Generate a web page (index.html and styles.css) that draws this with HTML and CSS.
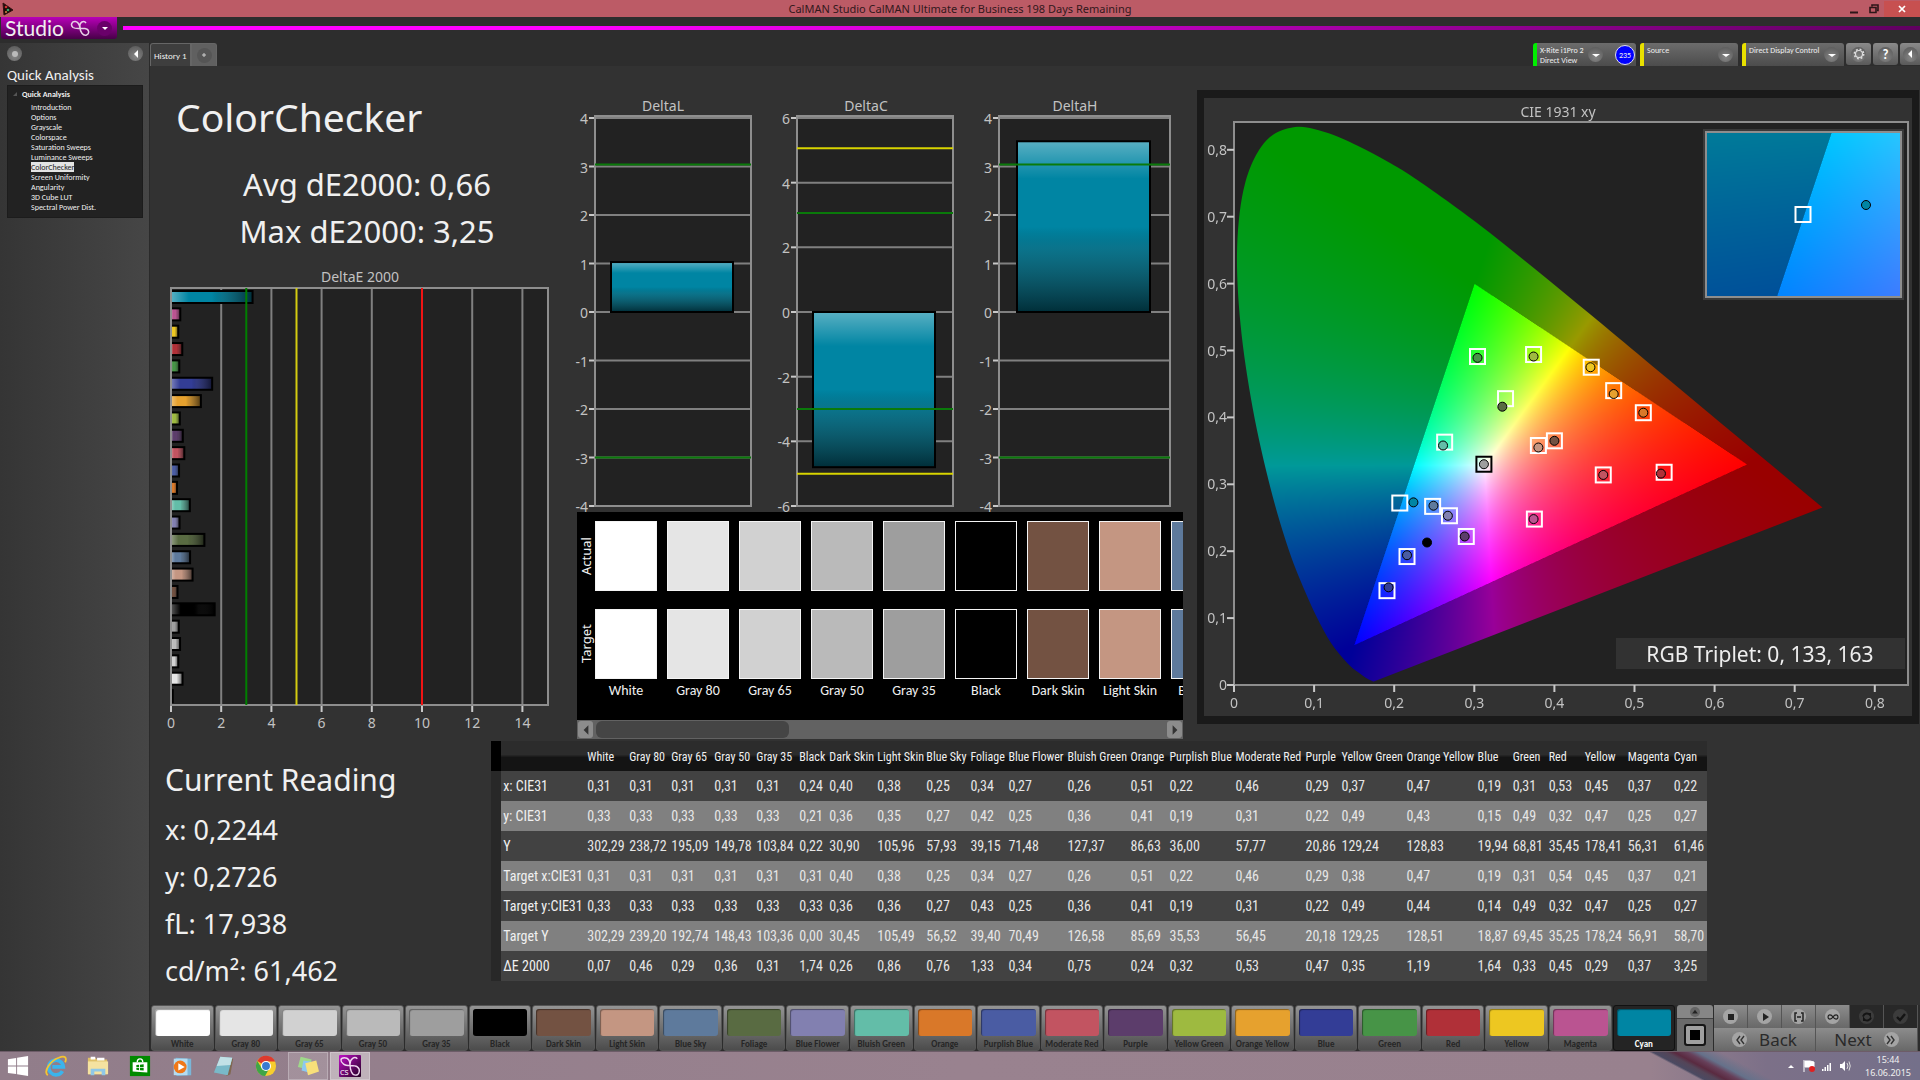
FILE: index.html
```html
<!DOCTYPE html>
<html lang="en">
<head>
    <meta charset="utf-8">
    <title>CalMAN Studio</title>
    <link rel="stylesheet" href="styles.css">
</head>
<body>
    <header class="titlebar">
        <svg class="app-icon" viewBox="0 0 12 14"><path d="M1 1 L11 8 L2 13 Z" fill="#1c0a0a" stroke="#32110f"/><circle cx="4" cy="5" r="1.3" fill="#c33"/><circle cx="6" cy="8" r="1.3" fill="#3a6"/><circle cx="4" cy="10" r="1" fill="#d84"/></svg>
        <span class="titlebar-text">CalMAN Studio CalMAN Ultimate for Business 198 Days Remaining</span>
        <div class="window-buttons">
            <button aria-label="Minimize"><svg viewBox="0 0 10 10"><path d="M1 8.5h8" stroke="#2c1618" stroke-width="2"/></svg></button>
            <button aria-label="Restore"><svg viewBox="0 0 10 10"><path d="M3 2.5V1h6v5.500H8M1 3.500h6v5H1z" fill="none" stroke="#2c1618" stroke-width="1.600"/></svg></button>
            <button class="close" aria-label="Close"><svg viewBox="0 0 10 10"><path d="M2 2l6 6M8 2l-6 6" stroke="#fff" stroke-width="1.700"/></svg></button>
        </div>
    </header>

    <div class="brandbar">
        <button class="brand">
            <span>Studio</span>
            <svg class="brand-logo" viewBox="0 0 20 17"><path d="M16 3 C14 0 9 2 10 7 C10 12 13 16 16.500 15 C20 13.500 19 9 15 8.500 C11 8 6 9.500 3 7.500 C0 5 2 1 5.500 1.500 C9 2 9.500 5 10 8" fill="none" stroke="#e6cfe6" stroke-width="1.500"/></svg>
            <span class="round round-purple"><svg viewBox="0 0 14 14"><path d="M4 6h6l-3 3z" fill="#fff"/></svg></span>
        </button>
        <div class="brand-line"></div>
    </div>

    <div class="workspace">
        <aside class="sidebar">
            <div class="sidebar-top">
                <button class="round" aria-label="Pin"><svg viewBox="0 0 14 14"><circle cx="7" cy="7" r="3" fill="#bbb"/></svg></button>
                <button class="round" aria-label="Collapse"><svg viewBox="0 0 14 14"><path d="M9 3v8l-4-4z" fill="#fff"/></svg></button>
            </div>
            <h2>Quick Analysis</h2>
            <nav class="tree">
                <div class="tree-root"><svg viewBox="0 0 4 4"><path d="M4 0v4H0z" fill="#555"/></svg>Quick Analysis</div>
                <a href="#">Introduction</a>
                <a href="#">Options</a>
                <a href="#">Grayscale</a>
                <a href="#">Colorspace</a>
                <a href="#">Saturation Sweeps</a>
                <a href="#">Luminance Sweeps</a>
                <a href="#" class="selected">ColorChecker</a>
                <a href="#">Screen Uniformity</a>
                <a href="#">Angularity</a>
                <a href="#">3D Cube LUT</a>
                <a href="#">Spectral Power Dist.</a>
            </nav>
        </aside>

        <div class="content">
            <div class="toolbar">
                <div class="tabs">
                    <button class="tab">History 1</button>
                    <button class="tab tab-add" aria-label="Add tab"><span class="round round-dim"><svg viewBox="0 0 14 14"><path d="M7 5v4M5 7h4" stroke="#ccc"/></svg></span></button>
                </div>
                <div class="devices">
                    <div class="device device-meter">
                        <button class="device-name">X-Rite i1Pro 2<br>Direct View</button>
                        <span class="round"><svg viewBox="0 0 14 14"><path d="M3 6h8l-4 3z" fill="#fff"/></svg></span>
                        <span class="level">235</span>
                    </div>
                    <div class="device device-source">
                        <button class="device-name">Source</button>
                        <span class="round"><svg viewBox="0 0 14 14"><path d="M3 6h8l-4 3z" fill="#fff"/></svg></span>
                    </div>
                    <div class="device device-display">
                        <button class="device-name">Direct Display Control</button>
                        <span class="round"><svg viewBox="0 0 14 14"><path d="M3 6h8l-4 3z" fill="#fff"/></svg></span>
                    </div>
                    <button class="tool" aria-label="Settings"><span class="round"><svg viewBox="0 0 14 14"><circle cx="7" cy="7" r="3.500" fill="none" stroke="#ddd" stroke-width="1.200"/><circle cx="7" cy="7" r="4.700" fill="none" stroke="#ddd" stroke-width="1.500" stroke-dasharray="1.800 1.900"/></svg></span></button>
                    <button class="tool" aria-label="Help"><span class="round">?</span></button>
                    <button class="tool tool-edge" aria-label="Expand"><span class="round"><svg viewBox="0 0 14 14"><path d="M9 3v8L5 7z" fill="#fff"/></svg></span></button>
                </div>
            </div>

            <main class="page">
                <div class="analysis">
                    <section class="summary">
                        <h1>ColorChecker</h1>
                        <div class="stats">
                            <div>Avg dE2000: 0,66</div>
                            <div>Max dE2000: 3,25</div>
                        </div>
                        <svg id="deltaE" class="chart" viewBox="0 0 419 466"></svg>
                    </section>

                    <section class="deltas">
                        <div class="delta-charts">
                            <svg id="deltaL" class="chart" viewBox="0 0 205 417"></svg>
                            <svg id="deltaC" class="chart" viewBox="0 0 205 417"></svg>
                            <svg id="deltaH" class="chart" viewBox="0 0 205 417"></svg>
                        </div>
                        <div class="strip">
                            <div class="strip-labels"><span>Actual</span><span>Target</span></div>
                            <div class="strip-items" id="strip"></div>
                        </div>
                        <div class="scrollbar">
                            <button aria-label="Scroll left"><svg viewBox="0 0 10 14"><path d="M8 1v12L2 7z" fill="#333"/></svg></button>
                            <div class="scroll-track"><div class="scroll-thumb"></div></div>
                            <button aria-label="Scroll right"><svg viewBox="0 0 10 14"><path d="M2 1v12l6-6z" fill="#333"/></svg></button>
                        </div>
                    </section>

                    <section class="cie">
                        <canvas id="gamut" width="1416" height="1236"></canvas>
                        <svg id="ciePlot" class="chart" viewBox="0 0 708 618"></svg>
                    </section>
                </div>

                <div class="lower">
                    <section class="reading">
                        <h3>Current Reading</h3>
                        <div>x: 0,2244</div>
                        <div>y: 0,2726</div>
                        <div>fL: 17,938</div>
                        <div>cd/m²: 61,462</div>
                    </section>
                    <table class="results" id="results"></table>
                </div>
            </main>

            <footer class="patterns">
                <div class="pattern-list" id="patterns"></div>
                <div class="pattern-window">
                    <button class="up" aria-label="More patterns"><span class="round round-small"><svg viewBox="0 0 14 14"><path d="M3 9h8L7 4z" fill="#222"/></svg></span></button>
                    <button class="window-size" aria-label="Window size"><span></span></button>
                </div>
                <div class="transport">
                    <div class="transport-row">
                        <button aria-label="Stop"><span class="round round-light"><svg viewBox="0 0 14 14"><path d="M4 4h6v6H4z" fill="#222"/></svg></span></button>
                        <button aria-label="Play"><span class="round round-light"><svg viewBox="0 0 14 14"><path d="M5 3l6 4-6 4z" fill="#222"/></svg></span></button>
                        <button aria-label="Series"><span class="round round-light"><svg viewBox="0 0 14 14"><path d="M5 3H3v8h2M9 3h2v8H9M5 7h4" fill="none" stroke="#222" stroke-width="1.500"/></svg></span></button>
                        <button aria-label="Continuous"><span class="round round-light"><svg viewBox="0 0 14 14"><path d="M7 7C5 4 2 4.500 2 7s3 3 5 0 5-2.500 5 0-3 3-5 0" fill="none" stroke="#222" stroke-width="1.200"/></svg></span></button>
                        <button class="off" aria-label="Refresh"><span class="round round-dark"><svg viewBox="0 0 14 14"><path d="M3 6.500C4 3 8 2.500 10 5V3M11 7.500C10 11 6 11.500 4 9v2" fill="none" stroke="#141414" stroke-width="2"/></svg></span></button>
                        <button class="off" aria-label="Accept"><span class="round round-dark"><svg viewBox="0 0 14 14"><path d="M3 7l3 3 5-6" fill="none" stroke="#141414" stroke-width="2.400"/></svg></span></button>
                    </div>
                    <div class="transport-row transport-nav">
                        <button><span class="round round-light"><svg viewBox="0 0 14 14"><path d="M7 3L4 7l3 4M11 3L8 7l3 4" fill="none" stroke="#333" stroke-width="1.400"/></svg></span>Back</button>
                        <button>Next<span class="round round-light"><svg viewBox="0 0 14 14"><path d="M3 3l3 4-3 4M7 3l3 4-3 4" fill="none" stroke="#333" stroke-width="1.400"/></svg></span></button>
                    </div>
                </div>
            </footer>
        </div>
    </div>

    <div class="taskbar">
        <button class="start" aria-label="Start"><svg viewBox="0 0 24 24"><path d="M1 4.500l9-1.300v8.300H1zM11 3l12-1.800v10.300H11zM1 12.500h9v8.300l-9-1.300zM11 12.500h12v10.300L11 21z" fill="#fff"/></svg></button>
        <button aria-label="Internet Explorer"><svg viewBox="0 0 24 24"><path d="M19 17.500A8 8 0 1 1 20 13H8" fill="none" stroke="#3bb4ec" stroke-width="4"/><path d="M3 22C-2 18 6 6 15 3c7-3 9 0 7 5" fill="none" stroke="#f4c430" stroke-width="2"/></svg></button>
        <button aria-label="File Explorer"><svg viewBox="0 0 24 24"><path d="M1 3h8l2 2h11v16H1z" fill="#dfc067"/><path d="M4 2h5v3H4zM11 3h8v3h-8z" fill="#fff"/><path d="M1 7h22v14H1z" fill="#f5e2a0"/><path d="M4 22v-7h16v7h-4v-4H8v4z" fill="#8fc8e8"/></svg></button>
        <button aria-label="Store"><svg viewBox="0 0 24 24"><path d="M1 1h22v22H1z" fill="#008a00"/><path d="M4 8h16v11l-16-1z" fill="#fff"/><path d="M9 8c0-5 6-5 6 0" fill="none" stroke="#fff" stroke-width="1.500"/><path d="M8 11l3-.4V13H8zM12 10.500l4-.5v3h-4zM8 14h3v2.600L8 16.200zM12 14h4v3l-4-.4z" fill="#008a00"/></svg></button>
        <button aria-label="Media Player"><svg viewBox="0 0 24 24"><path d="M5 3l17 1v18l-16 1z" fill="#7ab6d8"/><path d="M3 4h15v18H3z" fill="#b5dcf0"/><circle cx="10" cy="13" r="7" fill="#f07818"/><path d="M8 9l7 4-7 4z" fill="#fff"/></svg></button>
        <button aria-label="Notepad"><svg viewBox="0 0 24 24"><path d="M9 2l13 2-3 17-4 2z" fill="#806850"/><path d="M8 2l13 1-5 19-15-3z" fill="#79b9c8"/><path d="M8 2l13 1-2 8L4 12z" fill="#c2e1e6"/></svg></button>
        <button aria-label="Chrome"><svg viewBox="0 0 24 24"><circle cx="12" cy="12" r="11" fill="#f7cd2e"/><path d="M12 12L2.500 6.500A11 11 0 0 1 22 7H12z" fill="#de3a2e"/><path d="M2.500 6.500A11 11 0 0 0 11 23l5-9H7z" fill="#3fa548"/><circle cx="12" cy="12" r="5.500" fill="#fff"/><circle cx="12" cy="12" r="4.300" fill="#3a7bd0"/></svg></button>
        <button class="open" aria-label="Sticky Notes"><svg viewBox="0 0 24 24"><path d="M4 2l12 3-3 11-12-3z" fill="#9fd98a"/><path d="M7 6l12 2-3 12-11-3z" fill="#8cc8f0"/><path d="M9 9l12-3 3 12-12 4z" fill="#f8e07a"/></svg></button>
        <button class="open active" aria-label="CalMAN Studio"><svg viewBox="0 0 24 24"><defs><linearGradient id="cs" x1="0" y1="0" x2="1" y2="1"><stop offset="0" stop-color="#c010c8"/><stop offset="1" stop-color="#200020"/></linearGradient></defs><rect width="24" height="24" rx="1" fill="url(#cs)"/><path d="M20 4C17 1 12 4 12 10s2 12 6 12 6-6 2-9-11 0-15-3-4-7 1-7 6 4 6 8" fill="none" stroke="#f0d8f0" stroke-width="1.500"/><text x="1" y="22" font-size="8" fill="#fff">CS</text></svg></button>
        <div class="tray">
            <svg viewBox="0 0 12 12"><path d="M3 8h6L6 5z" fill="#fff"/></svg>
            <svg viewBox="0 0 12 14"><path d="M1 1v12M2 2h5l4 1v5H2z" fill="#fff" stroke="#fff"/><circle cx="9" cy="10" r="3" fill="#e02020"/></svg>
            <svg viewBox="0 0 12 12"><path d="M1 9h1.500v2H1zM3.500 7H5v4H3.500zM6 5h1.500v6H6zM8.500 3H10v8H8.500z" fill="#fff"/></svg>
            <svg viewBox="0 0 12 12"><path d="M1 4h2l3-3v10L3 8H1z" fill="#fff"/><path d="M8 3q2 3 0 6M10 1.500q2.500 4.500 0 9" fill="none" stroke="#ddd"/></svg>
            <div class="clock">15:44<br>16.06.2015</div>
        </div>
    </div>
    <script src="app.js"></script>
</body>
</html>
```
FILE: styles.css
```css
* { margin: 0; padding: 0; box-sizing: border-box; }
body { display: flex; flex-direction: column; height: 100vh; overflow: hidden; font-family: "Noto Sans", "Open Sans", sans-serif; font-size: 14px; color: #f0f0f0; background: #2d2d2d; }
button { border: none; background: none; color: inherit; font: inherit; cursor: pointer; }
svg { display: block; }
a { color: inherit; text-decoration: none; }

/* window frame */
.titlebar { display: flex; align-items: center; height: 17px; padding-left: 2px; background: #bc5b66; color: #32181c; }
.app-icon { width: 12px; height: 14px; }
.titlebar-text { flex: 1; padding-left: 62px; text-align: center; font-size: 11px; line-height: 17px; }
.window-buttons { display: flex; height: 16px; }
.window-buttons button { display: flex; align-items: center; justify-content: center; width: 20px; }
.window-buttons svg { width: 10px; height: 10px; }
.window-buttons .close { width: 36px; background: #c75050; }

.brandbar { display: flex; align-items: flex-start; height: 26px; padding-left: 1px; gap: 6px; }
.brand { display: flex; align-items: center; justify-content: space-between; width: 116px; height: 22px; padding: 0 5px 0 4px; border-radius: 0 0 3px 3px; background: linear-gradient(#b800b8, #480048); font-family: Lato, sans-serif; font-size: 21px; line-height: 20px; }
.brand-logo { width: 20px; height: 17px; }
.brand-line { flex: 1; height: 4px; margin-top: 9px; background: linear-gradient(90deg, #f0f 0, #f0f 25%, #600060 100%); }

.round { display: flex; align-items: center; justify-content: center; flex: none; width: 15px; height: 15px; border-radius: 50%; background: radial-gradient(circle at 50% 70%, #858585, #555); color: #fff; font-family: Carlito, Lato, sans-serif; font-size: 13px; font-weight: bold; line-height: 15px; }
.round svg { width: 14px; height: 14px; }
.round-purple { background: #6a006a; }
.round-dim { background: #555; }
.round-light { background: #a4a4a4; }
.round-dark { background: #3c3c3c; }
.round-small { width: 10px; height: 10px; background: #666; }
.round-small svg { width: 10px; height: 10px; }

.workspace { display: flex; flex: 1; min-height: 0; }
.sidebar { flex: none; width: 150px; padding: 3px 6px 0 7px; background: linear-gradient(90deg, #353535, #464646); border-right: 1px solid #2a2a2a; font-family: Carlito, Lato, sans-serif; }
.sidebar-top { display: flex; justify-content: space-between; }
.sidebar h2 { margin: 5px 0 1px; font-size: 15px; line-height: 18px; font-weight: normal; }
.tree { padding: 3px 0 5px; background: #222; border: 1px solid #1c1c1c; font-size: 8px; line-height: 10px; }
.tree-root { display: flex; align-items: center; gap: 5px; padding-left: 5px; margin-bottom: 3px; font-weight: bold; }
.tree-root svg { width: 4px; height: 4px; }
.tree a { display: block; width: fit-content; margin-left: 23px; }
.tree .selected { background: #e4e4e4; color: #222; }

.content { display: flex; flex-direction: column; flex: 1; min-width: 0; }
.toolbar { display: flex; justify-content: space-between; height: 23px; }
.tabs { display: flex; }
.tab { height: 23px; padding: 0 3px; background: #3e3e3e; border: 1px solid #666; border-bottom: none; border-radius: 3px 0 0 0; font-family: Carlito, Lato, sans-serif; font-size: 9px; }
.tab-add { width: 26px; padding: 0 5px; background: #606060; border-radius: 0 3px 0 0; }
.devices { display: flex; gap: 2px; font-family: Carlito, Lato, sans-serif; }
.device { display: flex; align-items: center; margin-right: 2px; padding-right: 5px; border-left: 4px solid #e8e000; border-radius: 3px 3px 0 0; background: linear-gradient(#6c6c6c, #4c4c4c); }
.device-name { flex: 1; align-self: stretch; padding: 2px 0 0 3px; text-align: left; font-size: 8px; line-height: 10px; display: flex; }
.device-meter { width: 103px; padding-right: 1px; border-left-color: #0e0; }
.device-source { width: 98px; }
.device-display { width: 102px; margin-right: 0; }
.level { margin-left: 12px; width: 20px; height: 20px; border: 1px solid #dde; border-radius: 50%; background: #00f; text-align: center; font-size: 8px; line-height: 18px; }
.tool { display: flex; align-items: center; justify-content: center; width: 25px; height: 22px; border-radius: 3px; background: linear-gradient(#8a8a8a, #5a5a5a); }
.tool-edge { width: 20px; border-radius: 3px 0 0 3px; }

.page { display: flex; flex-direction: column; flex: 1; min-height: 0; background: #323232; }
.analysis { display: grid; grid-template-columns: 419fr 615fr 735fr; padding-right: 1px; }
.analysis > section { min-width: 0; }
.chart { width: 100%; height: auto; overflow: visible; }
.summary { padding-top: 27px; }
.summary h1 { padding-left: 26px; font-size: 39px; line-height: 48px; font-weight: normal; }
.stats { margin: 20px 0 13px; padding-left: 15px; text-align: center; font-size: 31px; line-height: 47px; }
.deltas { padding-top: 29px; }
.delta-charts { display: grid; grid-template-columns: 1fr 1fr 1fr; }

.strip { display: flex; height: 208px; margin: 0 1px 0 8px; padding-top: 9px; overflow: hidden; background: #000; }
.strip-labels { display: flex; flex-direction: column; gap: 18px; flex: none; width: 18px; }
.strip-labels span { height: 70px; writing-mode: vertical-rl; transform: rotate(180deg); text-align: center; font-size: 13px; line-height: 18px; }
.strip-items { display: flex; gap: 10px; min-width: 0; overflow: hidden; }
.strip-item { flex: none; width: 62px; text-align: center; white-space: nowrap; font-family: Carlito, Lato, sans-serif; font-size: 14px; line-height: 24px; }
.strip-color { height: 70px; border: 1px solid #f4f4f4; }
.strip-color + .strip-color { margin-top: 18px; }
.scrollbar { display: flex; height: 19px; margin: 0 1px 0 8px; padding: 1px; gap: 3px; background: #626262; }
.scrollbar button { display: flex; align-items: center; justify-content: center; width: 15px; border-radius: 3px; background: #8c8c8c; }
.scrollbar svg { width: 8px; height: 12px; }
.scroll-track { flex: 1; }
.scroll-thumb { width: 34%; height: 17px; border-radius: 6px; background: #454545; }

.cie { display: grid; align-self: start; margin: 24px 0 0 13px; border: 8px solid #1a1a1a; border-width: 8px 7px; }
.cie canvas, .cie svg { grid-area: 1 / 1; width: 100%; height: auto; }

.axis { fill: #c2c2c2; font-size: 14px; }
.plot-back { fill: #222; }
.plot-frame { fill: none; stroke: #8e8e8e; stroke-width: 2; }
.grid-line { stroke: #808080; stroke-width: 2; }
.tick { stroke: #c8c8c8; stroke-width: 2; }
.bar { stroke: #000; stroke-width: 2; }
.target { fill: none; stroke: #fff; stroke-width: 2; }
.target-gray { stroke: #000; }
.measured { stroke: #000; stroke-width: 1; }
.triplet { fill: #eee; font-size: 21px; }

.lower { display: grid; grid-template-columns: 341fr 1215fr 213fr; align-items: start; padding-top: 2px; }
.reading { padding: 15px 0 0 15px; font-size: 27px; line-height: 47px; }
.reading h3 { margin-bottom: 3px; font-size: 30px; font-weight: normal; }
.results { width: 100%; table-layout: fixed; border-collapse: collapse; font-family: "Roboto Condensed", Roboto, sans-serif; font-size: 14px; }
.results th, .results td { height: 30px; padding: 0 0 0 2px; text-align: left; font-weight: normal; white-space: nowrap; }
.results td { color: #e6e6e6; }
.results thead th { padding-top: 2px; font-size: 12px; background: linear-gradient(#2c2c2c 45%, #141414 55%); }
.results tbody tr { background: #424242; }
.results tbody tr:nth-child(even) { background: #808080; }
.results .handle { background: #282828; }
.results thead .handle { background: #000; }

.patterns { display: flex; height: 46px; padding-right: 2px; background: #2c2c2c; }
.pattern-list { display: flex; flex: 1; }
.pattern { display: flex; flex-direction: column; flex: 1; min-width: 0; margin-left: 1px; padding: 3px 3px 0; border: 1px solid #555; border-radius: 3px; background: linear-gradient(#949494, #4c4c4c); color: #262626; font-family: Carlito, Lato, sans-serif; font-size: 9px; font-weight: bold; line-height: 16px; white-space: nowrap; }
.pattern span { display: block; width: 100%; text-align: center; }
.pattern .pattern-color { flex: none; height: 27px; border-radius: 3px; box-shadow: inset 1px 1px 1px rgba(0,0,0,0.4); }
.pattern.current { background: #242424; border-color: #111; color: #fff; }
.pattern-window { display: flex; flex-direction: column; width: 36px; margin: 0 1px 0 2px; }
.up { display: flex; align-items: center; justify-content: center; height: 14px; background: #868686; border-bottom: 1px solid #444; border-radius: 3px 3px 0 0; }
.window-size { display: flex; align-items: center; justify-content: center; flex: 1; background: #6a6a6a; }
.window-size span { width: 22px; height: 22px; border: 2px solid #161616; border-radius: 3px; background: #000; box-shadow: inset 0 0 0 4px #a0a0a0; }
.transport { display: flex; flex-direction: column; width: 204px; }
.transport-row { display: flex; flex: 1; }
.transport-row button { display: flex; align-items: center; justify-content: center; flex: 1; gap: 12px; border-right: 1px solid #555; background: linear-gradient(#8c8c8c, #686868); }
.transport-row .off { background: #282828; }
.transport-nav button { color: #2a2a2a; font-size: 17px; line-height: 20px; }

.taskbar { display: flex; height: 29px; border-top: 1px solid #6d5c68; background: linear-gradient(90deg, #917d8a 0, #99828f 50%, #98818e 86%, #7c7088 92%, #74708a 100%); }
.taskbar button { display: flex; align-items: center; justify-content: center; width: 42px; }
.taskbar .start { width: 35px; }
.taskbar button svg { width: 22px; height: 24px; }
.taskbar .open { width: 40px; margin: 0 1px; background: rgba(255,255,255,0.14); border: 1px solid rgba(255,255,255,0.25); }
.taskbar .active { background: rgba(255,255,255,0.4); }
.tray { display: flex; flex: 0 0 270px; align-items: center; justify-content: flex-end; gap: 6px; margin-left: auto; padding-right: 9px; background: linear-gradient(28deg, transparent 24%, #4b4a62 26%, #544558 32%, #5a2a40 36%, #67405a 42%, #65718a 47%, transparent 58%) no-repeat 0 0 / 160px 100%; }
.tray svg { width: 12px; height: 14px; }
.clock { padding-left: 8px; text-align: center; font-size: 9px; line-height: 13px; }
```
FILE: app.js
```js
// name, colour, x, y, Y, target x, target y, target Y, dE, column width
const patches = [
    ['White', '#ffffff', '0,31', '0,33', '302,29', '0,31', '0,33', '302,29', '0,07', 42],
    ['Gray 80', '#e5e5e5', '0,31', '0,33', '238,72', '0,31', '0,33', '239,20', '0,46', 42],
    ['Gray 65', '#d1d1d1', '0,31', '0,33', '195,09', '0,31', '0,33', '192,74', '0,29', 43],
    ['Gray 50', '#bababa', '0,31', '0,33', '149,78', '0,31', '0,33', '148,43', '0,36', 42],
    ['Gray 35', '#9e9e9e', '0,31', '0,33', '103,84', '0,31', '0,33', '103,36', '0,31', 43],
    ['Black', '#000000', '0,24', '0,21', '0,22', '0,31', '0,33', '0,00', '1,74', 30],
    ['Dark Skin', '#735242', '0,40', '0,36', '30,90', '0,40', '0,36', '30,45', '0,26', 48],
    ['Light Skin', '#c49682', '0,38', '0,35', '105,96', '0,38', '0,36', '105,49', '0,86', 49],
    ['Blue Sky', '#5e7a9c', '0,25', '0,27', '57,93', '0,25', '0,27', '56,52', '0,76', 44],
    ['Foliage', '#596b42', '0,34', '0,42', '39,15', '0,34', '0,43', '39,40', '1,33', 38],
    ['Blue Flower', '#8280b0', '0,27', '0,25', '71,48', '0,27', '0,25', '70,49', '0,34', 59],
    ['Bluish Green', '#63bda8', '0,26', '0,36', '127,37', '0,26', '0,36', '126,58', '0,75', 63],
    ['Orange', '#d97829', '0,51', '0,41', '86,63', '0,51', '0,41', '85,69', '0,24', 39],
    ['Purplish Blue', '#4a5ca3', '0,22', '0,19', '36,00', '0,22', '0,19', '35,53', '0,32', 66],
    ['Moderate Red', '#c25461', '0,46', '0,31', '57,77', '0,46', '0,31', '56,45', '0,53', 70],
    ['Purple', '#5c3d6b', '0,29', '0,22', '20,86', '0,29', '0,22', '20,18', '0,47', 36],
    ['Yellow Green', '#9eba40', '0,37', '0,49', '129,24', '0,38', '0,49', '129,25', '0,35', 65],
    ['Orange Yellow', '#e6a12e', '0,47', '0,43', '128,83', '0,47', '0,44', '128,51', '1,19', 71],
    ['Blue', '#333d96', '0,19', '0,15', '19,94', '0,19', '0,14', '18,87', '1,64', 35],
    ['Green', '#479447', '0,31', '0,49', '68,81', '0,31', '0,49', '69,45', '0,33', 36],
    ['Red', '#b03038', '0,53', '0,32', '35,45', '0,54', '0,32', '35,25', '0,45', 36],
    ['Yellow', '#edc721', '0,45', '0,47', '178,41', '0,45', '0,47', '178,24', '0,29', 43],
    ['Magenta', '#ba5491', '0,37', '0,25', '56,31', '0,37', '0,25', '56,91', '0,37', 46],
    ['Cyan', '#0085a3', '0,22', '0,27', '61,46', '0,21', '0,27', '58,70', '3,25', 35]
];

const byId = id => document.getElementById(id);
const number = text => parseFloat(text.replace(',', '.'));

const line = (cls, x1, y1, x2, y2, extra = '') => `<line class="${cls}" x1="${x1}" y1="${y1}" x2="${x2}" y2="${y2}" ${extra}/>`;
const label = (x, y, text, anchor = 'middle') => `<text class="axis" x="${x}" y="${y}" text-anchor="${anchor}">${text}</text>`;

// glossy overlay shared by all bars, across or down
function gloss(id, horizontal) {
    return `<defs><linearGradient id="${id}" x1="0" y1="0" x2="${horizontal ? 1 : 0}" y2="${horizontal ? 0 : 1}">
        <stop offset="0" stop-color="#fff" stop-opacity="0.35"/>
        <stop offset="0.22" stop-color="#fff" stop-opacity="0"/>
        <stop offset="0.5" stop-color="#000" stop-opacity="0"/>
        <stop offset="0.62" stop-color="#333" stop-opacity="0.2"/>
        <stop offset="1" stop-color="#000" stop-opacity="0.65"/>
    </linearGradient></defs>`;
}

function bar(x, y, w, h, color, fill) {
    const box = `x="${x}" y="${y}" width="${w}" height="${h}"`;
    return `<rect ${box} fill="${color}"/><rect class="bar" ${box} fill="url(#${fill})"/>`;
}

function drawDeltaE() {
    const x0 = 21, top = 20, bottom = 437, unit = 25.1;
    let out = gloss('glossE', true) + `<rect class="plot-back" x="${x0}" y="${top}" width="377" height="${bottom - top}"/>`;
    out += label(210, 14, 'DeltaE 2000');
    for (let v = 0; v <= 14; v += 2) {
        const x = x0 + v * unit;
        out += line('grid-line', x, top, x, bottom) + line('tick', x, bottom, x, bottom + 7) + label(x, bottom + 23, v);
    }
    [...patches].reverse().forEach((p, i) => {
        out += bar(x0, 23 + i * 17.35, Math.max(1, number(p[8]) * unit), 12, p[1], 'glossE');
    });
    out += `<rect class="plot-frame" x="${x0}" y="${top}" width="377" height="${bottom - top}"/>`;
    [[3, '#008000'], [5, '#d4cc10'], [10, '#f01414']].forEach(([v, c]) => {
        out += line('limit', x0 + v * unit, top, x0 + v * unit, bottom, `stroke="${c}" stroke-width="2"`);
    });
    byId('deltaE').innerHTML = out;
}

function drawDelta(id, title, titleX, x0, x1, max, step, value, inset) {
    const top = 21, bottom = 411, zero = 217, unit = 194 / max;
    let out = gloss('gloss' + id, false) + `<rect class="plot-back" x="${x0}" y="${top}" width="${x1 - x0}" height="${bottom - top}"/>`;
    out += label(titleX, 16, title);
    for (let v = -max; v <= max; v += step) {
        const y = zero - v * unit;
        out += line('grid-line', x0, y, x1, y) + line('tick', x0 - 6, y, x0, y) + label(x0 - 7, y + 6, v, 'end');
    }
    out += `<rect class="plot-frame" x="${x0}" y="${top}" width="${x1 - x0}" height="${bottom - top}"/>`;
    const height = Math.abs(value) * unit;
    out += bar(x0 + inset, value > 0 ? zero - height : zero, x1 - x0 - inset * 2 - 2, height, '#0085a3', 'gloss' + id);
    [[3, '#0a7a0a'], [5, '#d8d400']].filter(l => l[0] < max).forEach(([v, c]) => {
        out += line('limit', x0, zero - v * unit - 2, x1, zero - v * unit - 2, `stroke="${c}" stroke-width="2"`);
        out += line('limit', x0, zero + v * unit, x1, zero + v * unit, `stroke="${c}" stroke-width="2"`);
    });
    byId(id).innerHTML = out;
}

// chromaticity plot
const px = x => 30 + x * 801;
const py = y => 587 - y * 669;

const locus = [
    [0.1741, 0.0050], [0.1644, 0.0109], [0.1566, 0.0177], [0.1440, 0.0297], [0.1241, 0.0578], [0.1096, 0.0868],
    [0.0913, 0.1327], [0.0687, 0.2007], [0.0454, 0.2950], [0.0235, 0.4127], [0.0082, 0.5384], [0.0039, 0.6548],
    [0.0139, 0.7502], [0.0389, 0.8120], [0.0743, 0.8338], [0.1142, 0.8262], [0.1547, 0.8059], [0.1929, 0.7816],
    [0.2296, 0.7543], [0.3016, 0.6923], [0.3731, 0.6245], [0.4441, 0.5547], [0.5125, 0.4866], [0.5752, 0.4242],
    [0.6270, 0.3725], [0.6915, 0.3083], [0.7347, 0.2653]
];

// brightest linear RGB for a chromaticity, dimmed outside the Rec.709 triangle
function colorAt(x, y) {
    const X = x / y, Z = (1 - x - y) / y;
    const rgb = [
        3.2406 * X - 1.5372 - 0.4986 * Z,
        -0.9689 * X + 1.8758 + 0.0415 * Z,
        0.0557 * X - 0.2040 + 1.0570 * Z
    ];
    const level = Math.min(...rgb) < 0 ? 153 : 255;
    const max = Math.max(...rgb);
    return rgb.map(c => level * Math.max(0, c) / max);
}

function paint(w, h, toX, toY) {
    const layer = document.createElement('canvas');
    layer.width = w;
    layer.height = h;
    const g = layer.getContext('2d');
    const image = g.createImageData(w, h);
    for (let j = 0; j < h; j++) {
        for (let i = 0; i < w; i++) {
            const [r, gr, b] = colorAt(toX(i), Math.max(0.001, toY(j)));
            image.data.set([r, gr, b, 255], (j * w + i) * 4);
        }
    }
    g.putImageData(image, 0, 0);
    return layer;
}

function drawGamut() {
    const canvas = byId('gamut');
    const g = canvas.getContext('2d');
    g.fillStyle = '#323232';
    g.fillRect(0, 0, canvas.width, canvas.height);
    g.fillStyle = '#222';
    g.fillRect(60, 48, 1348, 1126);

    // smooth outline through the locus points
    g.save();
    g.beginPath();
    const p = locus.map(([x, y]) => [px(x) * 2, py(y) * 2]);
    g.moveTo(...p[0]);
    for (let i = 0; i < p.length - 1; i++) {
        const a = p[Math.max(0, i - 1)], b = p[i], c = p[i + 1], d = p[Math.min(p.length - 1, i + 2)];
        g.bezierCurveTo(b[0] + (c[0] - a[0]) / 6, b[1] + (c[1] - a[1]) / 6, c[0] - (d[0] - b[0]) / 6, c[1] - (d[1] - b[1]) / 6, c[0], c[1]);
    }
    g.closePath();
    g.clip();
    g.drawImage(paint(canvas.width, canvas.height, i => (i / 2 - 30) / 801, j => (587 - j / 2) / 669), 0, 0);
    g.restore();

    // magnified view around the current target
    g.fillStyle = '#3a3a3a';
    g.fillRect(998, 62, 402, 342);
    g.drawImage(paint(390, 330, i => 0.2080 + (i / 2 - 97) / 3700, j => 0.2700 - (j / 2 - 82) / 3088), 1004, 68);
}

function drawCie() {
    // target x, target y, measured x, measured y
    const points = {
        'Green': [0.304, 0.491, 0.304, 0.489], 'Yellow Green': [0.374, 0.494, 0.374, 0.491],
        'Yellow': [0.446, 0.475, 0.445, 0.475], 'Orange Yellow': [0.474, 0.440, 0.474, 0.435],
        'Orange': [0.511, 0.407, 0.511, 0.407], 'Foliage': [0.339, 0.428, 0.335, 0.416],
        'Bluish Green': [0.263, 0.363, 0.261, 0.358], 'Dark Skin': [0.400, 0.365, 0.400, 0.365],
        'Light Skin': [0.380, 0.358, 0.380, 0.355], 'Gray 35': [0.312, 0.330, 0.312, 0.330],
        'Red': [0.537, 0.318, 0.533, 0.316], 'Moderate Red': [0.461, 0.314, 0.461, 0.314],
        'Cyan': [0.207, 0.272, 0.224, 0.273], 'Blue Sky': [0.248, 0.267, 0.249, 0.268],
        'Blue Flower': [0.269, 0.253, 0.267, 0.253], 'Purple': [0.290, 0.222, 0.288, 0.222],
        'Magenta': [0.375, 0.248, 0.374, 0.248], 'Purplish Blue': [0.216, 0.192, 0.216, 0.194],
        'Blue': [0.191, 0.141, 0.193, 0.146], 'Black': [null, null, 0.241, 0.213]
    };
    let out = `<rect class="plot-frame" x="30" y="24" width="674" height="563"/>` + label(354, 19, 'CIE 1931 xy');
    for (let i = 0; i <= 8; i++) {
        const v = i / 10, text = i ? '0,' + i : '0';
        out += line('tick', px(v), 587, px(v), 594) + label(px(v), 610, text);
        out += line('tick', 23, py(v), 30, py(v)) + label(23, py(v) + 5, text, 'end');
    }
    for (const name in points) {
        const [tx, ty, mx, my] = points[name];
        const color = patches.find(p => p[0] === name)[1];
        if (tx) {
            out += `<rect class="target${name === 'Gray 35' ? ' target-gray' : ''}" x="${px(tx) - 7.5}" y="${py(ty) - 7.5}" width="15" height="15"/>`;
        }
        out += `<circle class="measured" cx="${px(mx)}" cy="${py(my)}" r="4.5" fill="${color}"/>`;
    }
    out += `<rect class="plot-frame" x="502" y="34" width="195" height="165"/>`;
    out += `<rect class="target" x="591.5" y="109" width="15" height="15"/><circle class="measured" cx="662" cy="107" r="4.5" fill="#0085a3"/>`;
    out += `<rect x="412" y="540" width="289" height="31" fill="#323232"/><text class="triplet" x="556" y="564" text-anchor="middle">RGB Triplet: 0, 133, 163</text>`;
    byId('ciePlot').innerHTML = out;
}

function fillTable() {
    const total = 10 + 84 + patches.reduce((sum, p) => sum + p[9], 0);
    const col = w => `<col style="width: ${w / total * 100}%">`;
    const rows = ['x: CIE31', 'y: CIE31', 'Y', 'Target x:CIE31', 'Target y:CIE31', 'Target Y', 'ΔE 2000'];
    byId('results').innerHTML = `<colgroup>${col(10)}${col(84)}${patches.map(p => col(p[9])).join('')}</colgroup>
        <thead><tr><th class="handle"></th><th></th>${patches.map(p => `<th scope="col">${p[0]}</th>`).join('')}</tr></thead>
        <tbody>${rows.map((name, r) => `<tr><td class="handle"></td><th scope="row">${name}</th>${patches.map(p => `<td>${p[r + 2]}</td>`).join('')}</tr>`).join('')}</tbody>`;
}

// only the items scrolled into view
byId('strip').innerHTML = patches.slice(0, 9).map(p => `<div class="strip-item">
    <div class="strip-color" style="background: ${p[1]}"></div>
    <div class="strip-color" style="background: ${p[1]}"></div>${p[0]}</div>`).join('');

byId('patterns').innerHTML = patches.map(p => `<button class="pattern${p[0] === 'Cyan' ? ' current' : ''}">
    <span class="pattern-color" style="background: ${p[1]}"></span><span>${p[0]}</span></button>`).join('');

drawDeltaE();
drawDelta('deltaL', 'DeltaL', 94, 26, 182, 4, 1, 1.03, 16);
drawDelta('deltaC', 'DeltaC', 92, 23, 179, 6, 2, -4.8, 16);
drawDelta('deltaH', 'DeltaH', 96, 20, 191, 4, 1, 3.52, 18);
drawGamut();
drawCie();
fillTable();
```
